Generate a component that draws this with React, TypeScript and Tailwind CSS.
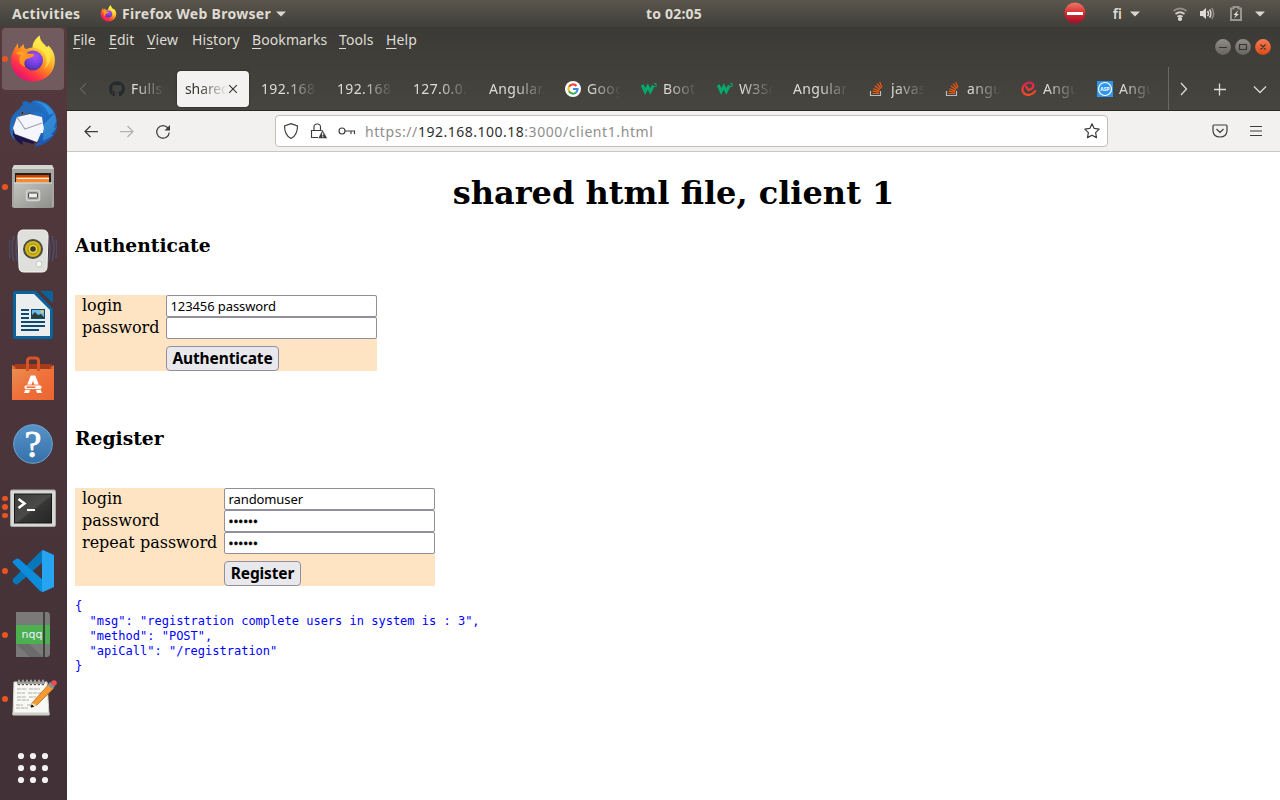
import type { ReactNode } from "react";
import { FaGithub } from "react-icons/fa";

const Firefox = ({ id, className }: { id: string; className: string }) => (
  <svg viewBox="0 0 48 48" className={className}>
    <defs>
      <linearGradient id={id + "a"} x1="0.8" y1="0.1" x2="0.2" y2="0.95">
        <stop offset="0" stopColor="#fff44f" />
        <stop offset="0.3" stopColor="#ffbd2e" />
        <stop offset="0.52" stopColor="#ff8020" />
        <stop offset="0.75" stopColor="#ff3647" />
        <stop offset="1" stopColor="#e60c77" />
      </linearGradient>
      <radialGradient id={id + "b"} cx="0.6" cy="0.3" r="0.75">
        <stop offset="0" stopColor="#a84df0" />
        <stop offset="0.5" stopColor="#7542e5" />
        <stop offset="1" stopColor="#4b2ba0" />
      </radialGradient>
      <linearGradient id={id + "c"} x1="0" y1="0" x2="1" y2="1">
        <stop offset="0" stopColor="#ffab22" />
        <stop offset="1" stopColor="#ff7a24" />
      </linearGradient>
    </defs>
    <path d="M9 8c0 2 .2 4 .6 6l5-5c0 3 1 5 3 5 2-1 4-1.500 6-1.500 0-5 3-9 7-12 0 6 3 7 7 12l2-2c5 5 7 11 6 18-1 10-10 18-21 18C13 46.500 3 39 2 27c-.5-7 3-13 7-19z" fill={`url(#${id}a)`} />
    <path d="M30.600.500c-4 4-7 7-7 12 9 1 14 7 14 13 0 4-1 7-3 9 6-4 8-12 7-18-3-6-10-8-11-16z" fill="#fff04b" opacity=".65" />
    <circle cx="24" cy="25.500" r="10" fill={`url(#${id}b)`} />
    <path d="M7 18c4-2 8-2 11 .5l7 .5c.5 3-4 4-7 5s-3 5-2 8c-6-2-7-8-4-12-2 0-4-1-5-2z" fill={`url(#${id}c)`} />
  </svg>
);

const Thunderbird = () => (
  <svg viewBox="0 0 48 48" className="size-12">
    <defs>
      <linearGradient id="tb" x1="0" y1="0" x2="1" y2="1">
        <stop offset="0" stopColor="#1d62b0" />
        <stop offset="0.45" stopColor="#2272cb" />
        <stop offset="1" stopColor="#1b4ca8" />
      </linearGradient>
    </defs>
    <path d="M25 1.500C38 1 48 11 48 25c0 12-9 21-23 22.500l6-6-6 1 7-9V19L21 14l-9 3C5 20 4 27 4 34l2 7C2 38 0 32 1 24 2 17 7 12 10 10l4-5-1-2 4-1 4 2z" fill="url(#tb)" />
    <path d="M4 31l1 4 21 8-2 2-11-3 1 4c-5-2-8-6-10-10z" fill="#1d1550" />
    <path d="M8 18l13-3 12 3 1 7 1 4-1 5-2 0-3 7-1 2-22-8-2-6z" fill="#f4f6fb" />
    <path d="M8 18l8 12 17-6" fill="none" stroke="#a0a4ad" strokeWidth="1.100" />
    <path d="M14 6C20 3 27 4 32 9l5 6c-6-3-12-2-16-1-4-1-8 1-11 4-1-5 1-9 4-12z" fill="#2369b8" />
    <path d="M24 2c8 1 14 7 16 14l5-2C40 6 33 2 24 2z" fill="#3ca5e8" opacity=".6" />
    <path d="M35 25l11-11 1 7 1-1-3 9 3-1-6 8 3 0-11 6z" fill="#48b5ec" opacity=".45" />
    <circle cx="13.500" cy="14" r="1.500" fill="#222" stroke="#766" />
  </svg>
);

const Files = () => (
  <svg viewBox="0 0 48 48" className="size-12">
    <defs>
      <linearGradient id="fl" x1="0" y1="0" x2="1" y2="1">
        <stop offset="0" stopColor="#c4c4c1" />
        <stop offset="1" stopColor="#8e8e8b" />
      </linearGradient>
    </defs>
    <path d="M5 2h38l2 4v38l-2 1H5l-2-1V6z" fill="#a6a6a3" />
    <path d="M5 2h38l2 4H3z" fill="#d5d5d2" />
    <path d="M6 10h36v10H6z" fill="#26201c" />
    <path d="M7 12h33v2H7z" fill="#c24414" />
    <path d="M7 14h33v6H7z" fill="#f58830" />
    <path d="M8 15.500h32" stroke="#fff0d8" />
    <path d="M5 19.500h38V45H5z" fill="url(#fl)" />
    <path d="M5 20h38" stroke="#dededb" />
    <rect x="17.500" y="27.500" width="13" height="10" rx="1.500" fill="#b0b0ad" stroke="#d4d4d2" strokeWidth="1.500" />
    <rect x="19.500" y="30" width="9" height="5" rx="1" fill="#eee" stroke="#444" />
  </svg>
);

const Speaker = () => (
  <svg viewBox="0 0 48 48" className="size-12">
    <g fill="none" stroke="#4d5f88" strokeWidth="1.600" opacity=".55">
      <path d="M9 9q-4 12 0 26M5 9q-4 13 0 25M1 13q-2 9 0 18M39 9q4 12 0 26M43 9q4 13 0 25M47 13q2 9 0 18" />
    </g>
    <path d="M14 3h20q5 0 5 6l-1 31q0 5-5 5H15q-5 0-5-5L9 9q0-6 5-6z" fill="#dfdfdc" stroke="#f6f6f4" />
    <circle cx="24" cy="22" r="10" fill="#494a48" />
    <circle cx="24" cy="22" r="8" fill="#cfb413" />
    <circle cx="24" cy="22" r="5" fill="#ead53d" stroke="#9a850b" />
    <circle cx="24" cy="22" r="2.800" fill="#3a3a38" />
    <circle cx="30" cy="37" r="3" fill="#f7f7f5" stroke="#c8c8c5" />
  </svg>
);

const Writer = () => (
  <svg viewBox="0 0 48 48" className="size-12">
    <path d="M6 0h21l17 18v28q0 2-2 2H6q-2 0-2-2V2q0-2 2-2z" fill="#07639b" />
    <path d="M7 3h18l16 16v26H7z" fill="#eceded" />
    <path d="M31 0h11q2 0 2 2v10z" fill="#07639b" />
    <path d="M12 19h8M12 23h8M12 27h8M12 31h24M12 35h24M12 39h18" stroke="#0b4c75" strokeWidth="2" />
    <path d="M22 18h14v10H22z" fill="#0b4c75" />
    <path d="M23 19h12v8H23z" fill="#72bbe4" />
    <path d="M23 27v-3l3-3 3 3 3-1 3 3v1z" fill="#2a3e40" />
    <circle cx="33" cy="20.500" r="1.500" fill="#e7c84c" />
  </svg>
);

const Software = () => (
  <svg viewBox="0 0 48 48" className="size-12">
    <defs>
      <linearGradient id="sw" x1="0" y1="0" x2="1" y2="1">
        <stop offset="0" stopColor="#e88e50" />
        <stop offset=".5" stopColor="#f0703a" />
        <stop offset="1" stopColor="#e9662f" />
      </linearGradient>
    </defs>
    <path d="M3 11l4-2h34l4 2v6H3z" fill="#a63b1b" />
    <path d="M3 10l4 3-4 2zM45 10l-4 3 4 2z" fill="#e36a35" />
    <path d="M3 14h42v31H3z" fill="url(#sw)" />
    <path d="M18.500 16V6q0-3 3-3h5q3 0 3 3v10" fill="none" stroke="#d65428" strokeWidth="3" />
    <path d="M21.700 20.500h4.600L33 38h-5L24 25.500 20 38h-5z" fill="#fff" />
    <rect x="15" y="30" width="18" height="4.500" rx="2.200" fill="#fff" stroke="#ec6c34" strokeWidth=".8" />
    <path d="M17.500 32.200h9" stroke="#e96a32" strokeWidth="1.500" />
  </svg>
);

const Help = () => (
  <svg viewBox="0 0 48 48" className="size-12">
    <defs>
      <linearGradient id="hp" x1="0" y1="0" x2="0" y2="1">
        <stop offset="0" stopColor="#5794c9" />
        <stop offset="1" stopColor="#3570a9" />
      </linearGradient>
    </defs>
    <circle cx="24" cy="25" r="19.300" fill="url(#hp)" stroke="#71a5d2" />
    <text x="24" y="38" textAnchor="middle" fill="#fff" stroke="#fff" strokeWidth=".8" className="font-['Liberation_Serif',serif] text-[38px]">?</text>
  </svg>
);

const Terminal = () => (
  <svg viewBox="0 0 48 48" className="size-12">
    <defs>
      <linearGradient id="tm" x1="0" y1="0" x2="1" y2="1">
        <stop offset="0" stopColor="#3c3d3b" />
        <stop offset=".5" stopColor="#4b4c4a" />
        <stop offset=".55" stopColor="#353635" />
        <stop offset="1" stopColor="#242524" />
      </linearGradient>
    </defs>
    <rect x="1.500" y="7" width="45" height="36.500" rx="1.500" fill="#d8d8d5" stroke="#aaa" />
    <rect x="5.500" y="11" width="37" height="29" fill="url(#tm)" stroke="#161616" />
    <path d="M9.500 16l6 4.500-6 4.500" fill="none" stroke="#fff" strokeWidth="2.500" />
    <path d="M18 27h8" stroke="#fff" strokeWidth="2" />
  </svg>
);

const Code = () => (
  <svg viewBox="0 0 48 48" className="size-12">
    <path d="M33 3l2 11L9 37q-2 1-3 0l-2-2q-1-1 0-3z" fill="#0877b9" />
    <path d="M4 16q-1-1 0-2l3-2q1-1 3 0l25 22-1 11q-2 0-4-2z" fill="#0b8ddb" />
    <path d="M34 3l11 5v32l-11 5q-1 0-1-2V5q0-2 1-2z" fill="#26a3f1" />
  </svg>
);

const Nqq = () => (
  <svg viewBox="0 0 48 48" className="size-12">
    <path d="M7 1h31q3 0 3 4v37q0 4-3 4H7z" fill="#7a7a79" />
    <path d="M7 33h13l14 13H21z" fill="#656565" opacity=".7" />
    <path d="M7 14h34v19H7z" fill="#4caf50" />
    <path d="M35 1v45" stroke="#41423f" strokeWidth="2" />
    <text x="23" y="27" textAnchor="middle" fill="#eef" className="font-['DejaVu_Sans',sans-serif] text-[11px]">nqq</text>
  </svg>
);

const Notes = () => (
  <svg viewBox="0 0 48 48" className="size-12">
    <path d="M5 7h33l2 33H4z" fill="#f8f8f4" stroke="#d6d6ce" />
    <path d="M3.500 37.500h37V40h-37z" fill="#cfcfc9" />
    <path d="M8 14h10m2 0h11M8 18h8m3 0h13M8 22h9m3 0h7M8 25h12M7 30h7m4 0h6M7 33h12" stroke="#a5a5a1" strokeWidth=".9" strokeDasharray="4 .7" />
    {[8, 12, 16, 20, 24, 28, 32].map((x) => (
      <path key={x} d={`M${x + 1} 5.500v4q1.500 1.500 2-1v-3q-1-2-2 0`} fill="#fff" stroke="#454541" strokeWidth="1" />
    ))}
    <path d="M23 28L40 9l5 4-17 17-6 2z" fill="#f49a31" stroke="#a9641d" strokeWidth=".7" />
    <path d="M23 28l5 2-6 3z" fill="#f3d7a8" />
    <path d="M22 32l1-2 1.500 1.500z" fill="#111" stroke="#111" />
    <path d="M38.500 10l2.500-3 5 4-2.500 3z" fill="#8a9093" />
    <circle cx="45" cy="8" r="2.800" fill="#e25058" />
  </svg>
);

const dockItems: { icon: ReactNode; dots: number; active?: boolean }[] = [
  { icon: <Firefox id="fd" className="size-12" />, dots: 1, active: true },
  { icon: <Thunderbird />, dots: 0 },
  { icon: <Files />, dots: 1 },
  { icon: <Speaker />, dots: 0 },
  { icon: <Writer />, dots: 0 },
  { icon: <Software />, dots: 0 },
  { icon: <Help />, dots: 0 },
  { icon: <Terminal />, dots: 3 },
  { icon: <Code />, dots: 1 },
  { icon: <Nqq />, dots: 1 },
  { icon: <Notes />, dots: 1 },
];

const Dock = () => (
  <aside className="flex w-[67px] shrink-0 flex-col bg-linear-to-b from-[#54393d] to-[#413137]">
    {dockItems.map((d, i) => (
      <div key={i} className="flex h-16 items-center">
        <div className={`ml-[2px] flex h-[62px] w-[62px] items-center rounded-[4px] ${d.active ? "bg-[#715b5f]" : ""}`}>
          <div className="flex w-[7px] flex-col items-start gap-[3px]">
            {Array.from({ length: d.dots }, (_, k) => (
              <span key={k} className="size-[5.500px] rounded-full bg-[#e95420]" />
            ))}
          </div>
          {d.icon}
        </div>
      </div>
    ))}
    <div className="mt-auto flex h-16 items-center pl-[17px]">
      <svg viewBox="0 0 32 32" className="size-8" fill="#f2f0f0">
        {[4, 16, 28].map((y) => [4, 16, 28].map((x) => <circle key={`${x}-${y}`} cx={x} cy={y} r="3.100" />))}
      </svg>
    </div>
  </aside>
);

const Caret = ({ className }: { className: string }) => (
  <svg viewBox="0 0 10 6" className={`h-[6px] w-[10px] shrink-0 ${className}`}>
    <path d="M0 .5h10L5 5.500z" fill="#d9d7d1" />
  </svg>
);

const TopBar = () => (
  <header className="grid h-[27px] shrink-0 grid-cols-[1fr_auto_1fr] items-center bg-linear-to-b from-[#5a564d] to-[#403f3a] text-[14px] font-bold text-[#dfdbd2]">
    <div className="flex items-center">
      <span className="ml-3 w-[88px] tracking-[0.350px]">Activities</span>
      <Firefox id="ft" className="size-[17px]" />
      <span className="ml-[5px] w-[149px] tracking-[0.300px] whitespace-nowrap">Firefox Web Browser</span>
      <Caret className="ml-[5px]" />
    </div>
    <span className="pl-[68px] tracking-[0.200px] whitespace-nowrap">to 02:05</span>
    <div className="flex items-center justify-end pr-[15px]">
      <svg viewBox="0 0 22 22" className="mb-px size-[22px]">
        <defs>
          <linearGradient id="ne" x1="0" y1="0" x2="0" y2="1">
            <stop offset="0" stopColor="#ee7a68" />
            <stop offset=".5" stopColor="#d62b2d" />
            <stop offset="1" stopColor="#a30d2b" />
          </linearGradient>
        </defs>
        <circle cx="11" cy="11" r="10.500" fill="url(#ne)" />
        <rect x="3" y="10" width="16" height="3" fill="#fff" />
      </svg>
      <span className="ml-[27px] font-semibold">fi</span>
      <Caret className="ml-[8px]" />
      <svg viewBox="0 0 16 16" className="ml-[32px] size-4" fill="none" stroke="#dfdbd2" strokeWidth="1.800">
        <path d="M1.500 5q6.500-5 13 0" opacity=".45" />
        <path d="M3.500 8q4.500-3.500 9 0" opacity=".9" />
        <path d="M5.500 10.800q2.500-1.800 5 0" />
        <circle cx="8" cy="13" r="1.200" fill="#dfdbd2" />
      </svg>
      <svg viewBox="0 0 16 16" className="ml-[11px] size-4" fill="none" stroke="#dfdbd2" strokeWidth="1.500">
        <path d="M1 5h2.500L7 2v11L3.500 10H1z" fill="#dfdbd2" stroke="none" />
        <path d="M8.500 5q2 2.500 0 5M10.500 3.500q3 4 0 8" />
        <path d="M12.700 2q4 5.500 0 11" opacity=".45" />
      </svg>
      <svg viewBox="0 0 14 17" className="ml-[14px] h-[17px] w-[14px]">
        <path d="M2 3.500h2.500V2h5v1.500H12V15H2z" fill="none" stroke="#99968f" strokeWidth="2" />
        <path d="M9.500 5L4.500 10h2.300L5 13.500 10 9H7.500z" fill="#e6e3dc" />
      </svg>
      <Caret className="ml-[12px]" />
    </div>
  </header>
);

const menu = [
  ["", "F", "ile", "w-9"],
  ["", "E", "dit", "w-[38px]"],
  ["", "V", "iew", "w-[45px]"],
  ["Hi", "s", "tory", "w-[60px]"],
  ["", "B", "ookmarks", "w-[87px]"],
  ["", "T", "ools", "w-[47px]"],
  ["", "H", "elp", "w-10"],
];

const Google = () => (
  <svg viewBox="0 0 16 16" className="size-4" fill="none" strokeWidth="2">
    <circle cx="8" cy="8" r="8" fill="#fff" />
    <path d="M11.500 5A4.600 4.600 0 0 0 4 5.700" stroke="#ea4335" />
    <path d="M4 5.700a4.600 4.600 0 0 0 0 4.600" stroke="#fbbc05" />
    <path d="M4 10.300A4.600 4.600 0 0 0 11 11.500" stroke="#34a853" />
    <path d="M11 11.500A4.600 4.600 0 0 0 12.600 8H8" stroke="#4285f4" />
  </svg>
);
const W3 = () => (
  <svg viewBox="0 0 16 16" className="size-4">
    <path d="M1.200 4l3 6.500L6.800 5.500 9.300 10.500l3-6" fill="none" stroke="#04aa6d" strokeWidth="3" />
    <text x="12.800" y="5.500" fill="#04aa6d" className="text-[6px] font-bold">3</text>
  </svg>
);
const Stack = () => (
  <svg viewBox="0 0 16 16" className="size-4" fill="none">
    <path d="M1.500 10v4.500h10V10" stroke="#bcbbb8" strokeWidth="1.200" />
    <path d="M3.500 12.500h6.500M3.600 10.200l6.300 1M4.300 7.700l6 2.200M5.800 5l5.200 3.600M8 2.700l4 4.800M10.700 1l2.300 5.500" stroke="#f2580f" strokeWidth="1.200" />
  </svg>
);
const Swirl = () => (
  <svg viewBox="0 0 16 16" className="size-4" fill="none" strokeWidth="2.200" strokeLinecap="round">
    <defs>
      <linearGradient id="sr" x1="0" y1="0" x2="0" y2="1">
        <stop offset="0" stopColor="#d92354" />
        <stop offset="1" stopColor="#fa4b20" />
      </linearGradient>
    </defs>
    <path d="M5 5.500L7.500 9q5-1.500 5-4.500Q11.500 1 7 1.700 1 3.500 1.500 9.500q1.500 5 6.500 4.300 4-.5 6.200-3.800" stroke="url(#sr)" />
  </svg>
);
const Asp = () => (
  <svg viewBox="0 0 16 16" className="size-4">
    <path d="M0 0h16v16H0z" fill="#2e96ee" />
    <circle cx="8" cy="8" r="6.500" fill="none" stroke="#fff" strokeWidth="1.200" />
    <text x="8" y="10" textAnchor="middle" fill="#fff" className="text-[5px] font-bold">ASP</text>
  </svg>
);

const tabs: { label: string; icon?: ReactNode; active?: boolean }[] = [
  { label: "Fullst", icon: <FaGithub className="size-4 text-[#24292e]" /> },
  { label: "shared", active: true },
  { label: "192.168." },
  { label: "192.168." },
  { label: "127.0.0.1" },
  { label: "Angular." },
  { label: "Goog", icon: <Google /> },
  { label: "Boot", icon: <W3 /> },
  { label: "W3Sc", icon: <W3 /> },
  { label: "Angular" },
  { label: "javas", icon: <Stack /> },
  { label: "angu", icon: <Stack /> },
  { label: "Angu", icon: <Swirl /> },
  { label: "Angu", icon: <Asp /> },
];

const Chrome = () => (
  <div className="shrink-0">
    <div className="flex h-[83px] flex-col bg-linear-to-b from-[#3b3a36] to-[#464540] text-[14px] text-[#dfdcd5]">
      <div className="flex h-10 shrink-0 justify-between">
        <nav className="flex items-start pt-[3px] pl-[6px]">
          {menu.map(([a, b, c, w]) => (
            <span key={b + c} className={`${w} leading-5 tracking-[0.100px] whitespace-nowrap`}>
              {a}
              <span className="underline underline-offset-[3px]">{b}</span>
              {c}
            </span>
          ))}
        </nav>
        <svg viewBox="0 0 60 18" className="mt-[11px] mr-2 h-[18px] w-[60px]">
          <defs>
            <linearGradient id="wb" x1="0" y1="0" x2="0" y2="1">
              <stop offset="0" stopColor="#8f8d86" />
              <stop offset="1" stopColor="#66645d" />
            </linearGradient>
            <linearGradient id="wc" x1="0" y1="0" x2="0" y2="1">
              <stop offset="0" stopColor="#f37a55" />
              <stop offset="1" stopColor="#df4a16" />
            </linearGradient>
          </defs>
          <circle cx="11" cy="9" r="7.900" fill="url(#wb)" />
          <circle cx="31" cy="9" r="7.900" fill="url(#wb)" />
          <circle cx="51" cy="9" r="7.900" fill="url(#wc)" />
          <path d="M7 9.500h8M27.500 6.500h7v5h-7zM48.500 6.500l5 5M53.500 6.500l-5 5" fill="none" stroke="#35342f" strokeWidth="1.100" />
        </svg>
      </div>
      <div className="flex h-[43px] items-center">
        <div className="flex w-8 shrink-0 justify-center">
          <svg viewBox="0 0 10 14" className="h-[14px] w-[10px]" fill="none" stroke="#65635d" strokeWidth="1.100">
            <path d="M8 1.500L2.500 7 8 12.500" />
          </svg>
        </div>
        {tabs.map((t, i) => (
          <div key={i} className="w-[76px] shrink-0 px-[2px]">
            <div
              className={`flex h-9 items-center rounded-[4px] pl-2 ${
                t.active ? "bg-[#f3f2f1] pr-2 text-[#35342f] shadow-[0_0_2px_rgba(0,0,0,0.6)]" : "pr-[4px]"
              }`}
            >
              {t.icon && <span className="mr-[6px] size-4 shrink-0">{t.icon}</span>}
              <span
                className={`min-w-0 flex-1 overflow-hidden whitespace-nowrap ${
                  t.active
                    ? "tracking-[-0.100px] [mask-image:linear-gradient(to_left,transparent,black_30px)]"
                    : "tracking-[0.350px] [mask-image:linear-gradient(to_left,transparent_4px,black_34px)]"
                }`}
              >
                {t.label}
              </span>
              {t.active && (
                <svg viewBox="0 0 10 10" className="mr-[3px] size-[10px] shrink-0" fill="none" stroke="#35342f" strokeWidth="1.100">
                  <path d="M1.200 1.200l7.600 7.600M8.800 1.200L1.200 8.800" />
                </svg>
              )}
            </div>
          </div>
        ))}
        <div className="ml-[5px] h-full w-px bg-[#6a6963]" />
        <svg viewBox="0 0 110 20" className="h-5 w-[110px] shrink-0" fill="none" stroke="#dedbd4" strokeWidth="1.300">
          <path d="M12 4l5.500 6-5.500 6M45 10.500h12M50.500 4.500v12M85 7.500l6 6 6-6" />
        </svg>
      </div>
    </div>
    <div className="flex h-[42px] items-center border-t border-b border-t-[#2b2a27] border-b-[#c8c7c5] bg-[#f3f1f0] font-normal">
      <svg viewBox="0 0 120 20" className="h-5 w-[120px] shrink-0" fill="none" stroke="#3e3d3b" strokeWidth="1.250">
        <path d="M31 10.500H18M23.500 5L18 10.500l5.500 5.500" />
        <path d="M53 10.500h13M60.500 5L66 10.500 60.500 16" stroke="#b2b1af" />
        <path d="M101 7A6.300 6.300 0 1 0 102.300 11.500" />
        <path d="M103 4v5.500h-5.500z" fill="#3e3d3b" stroke="none" />
      </svg>
      <div className="ml-[88px] flex h-8 w-[833px] shrink-0 items-center rounded-[4px] border border-[#c1bfbc] bg-white">
        <svg viewBox="0 0 80 20" className="ml-[6px] h-5 w-20 shrink-0" fill="none" stroke="#3e3d3b" strokeWidth="1.150">
          <path d="M9 2.600l6.500 2.400c0 6-1.500 10-6.500 12.600C4 15 2.500 11 2.500 5z" />
          <path d="M36 16.500h-6.500v-7H41M32 9.500V6q0-3 3.200-3T38.500 6v3.500" />
          <path d="M40.500 8.500l5 9H36z" fill="#3e3d3b" stroke="#fff" strokeWidth=".5" />
          <path d="M40.700 11.500v3M40.700 15.300v1" stroke="#fff" />
          <circle cx="60" cy="10" r="3" />
          <path d="M63 10h9.500v3M69 10v3" />
        </svg>
        <span className="ml-[3px] flex-1 text-[14px] tracking-[0.580px] whitespace-nowrap text-[#8f8e8c]">
          https://<span className="tracking-[0.500px] text-[#2f2e2c]">192.168.100.18</span>:3000/client1.html
        </span>
        <svg viewBox="0 0 18 18" className="mr-[6px] size-[18px]" fill="none" stroke="#3e3d3b" strokeWidth="1.200" strokeLinejoin="round">
          <path d="M9 1.800l2.200 4.600 5 .7-3.600 3.500.9 5L9 13.200 4.500 15.600l.9-5L1.800 7.100l5-.7z" />
        </svg>
      </div>
      <svg viewBox="0 0 60 20" className="ml-[103px] h-5 w-[60px] shrink-0" fill="none" stroke="#3e3d3b" strokeWidth="1.200">
        <path d="M3 4h12q1 0 1 1v5q-.5 6-7 6t-7-6V5q0-1 1-1zM5.500 8L9 11.500 12.500 8" />
        <path d="M39 5.500h12M39 10h12M39 14.500h12" />
      </svg>
    </div>
  </div>
);

const Field = ({ value = "" }: { value?: string }) => (
  <input
    readOnly
    defaultValue={value}
    className={`block h-[22px] w-[211px] rounded-[2px] border border-[#8f8f9d] bg-white px-[3.500px] font-['Noto_Sans',sans-serif] text-[13px] text-black ${
      value.startsWith("•") ? "[-webkit-text-stroke:0.500px_black]" : "tracking-[-0.100px]"
    }`}
  />
);

const Form = ({ rows, labelWidth, action, buttonWidth }: { rows: string[][]; labelWidth: string; action: string; buttonWidth: string }) => (
  <div className="w-fit bg-[#ffe4c4]">
    {rows.map(([label, value]) => (
      <div key={label} className="flex h-[22px]">
        <label className={`${labelWidth} pl-[7px] text-[16px] leading-[21px]`}>{label}</label>
        <Field value={value} />
      </div>
    ))}
    <div className="flex pt-[7px]">
      <span className={labelWidth} />
      <button className={`${buttonWidth} h-[25px] rounded-[4px] border border-[#8f8f9d] bg-[#e9e9ed] pb-px font-['Noto_Sans',sans-serif] text-[15.500px] leading-[22px] font-bold tracking-[-0.120px] whitespace-nowrap`}>
        {action}
      </button>
    </div>
  </div>
);

const message = `{
  "msg": "registration complete users in system is : 3",
  "method": "POST",
  "apiCall": "/registration"
}`;

export default function App() {
  return (
    <div className="flex h-[800px] w-[1280px] flex-col overflow-hidden bg-white font-['Noto_Sans',sans-serif]">
      <TopBar />
      <div className="flex min-h-0 flex-1">
        <Dock />
        <div className="flex min-w-0 flex-1 flex-col">
          <Chrome />
          <main className="flex-1 px-2 font-['DejaVu_Serif',serif] text-black">
            <h1 className="mt-[22px] text-center text-[32px] leading-[38px] font-bold">shared html file, client 1</h1>
            <h3 className="mt-[22px] mb-[38px] text-[18.720px] leading-[23px] font-bold">Authenticate</h3>
            <Form
              rows={[["login", "123456 password"], ["password", ""]]}
              labelWidth="w-[91px]"
              action="Authenticate"
              buttonWidth="w-[113px]"
            />
            <h3 className="mt-14 mb-[38px] text-[18.720px] leading-[23px] font-bold">Register</h3>
            <Form
              rows={[["login", "randomuser"], ["password", "••••••"], ["repeat password", "••••••"]]}
              labelWidth="w-[149px]"
              action="Register"
              buttonWidth="w-[77px]"
            />
            <pre className="mt-[13px] font-['DejaVu_Sans_Mono',monospace] text-[12px] leading-[15px] text-[#0000ff]">{message}</pre>
          </main>
        </div>
      </div>
    </div>
  );
}
